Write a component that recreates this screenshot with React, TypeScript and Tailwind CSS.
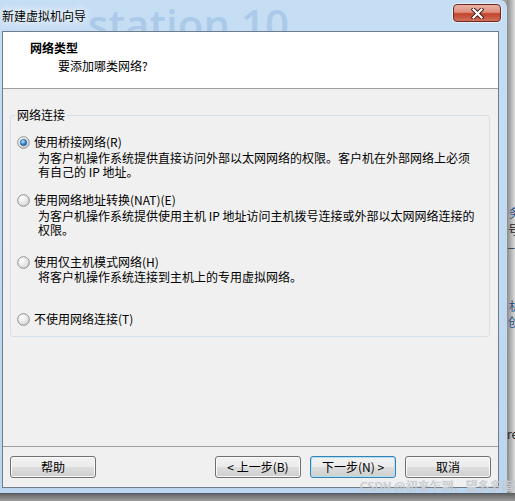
import React from "react"

const RADIOS = [
  { label: "使用桥接网络(R)", checked: true, desc: ["为客户机操作系统提供直接访问外部以太网网络的权限。客户机在外部网络上必须", "有自己的 IP 地址。"], mt: "mt-0", dmt: "mt-[2px]" },
  { label: "使用网络地址转换(NAT)(E)", checked: false, desc: ["为客户机操作系统提供使用主机 IP 地址访问主机拨号连接或外部以太网网络连接的", "权限。"], mt: "mt-[14px]", dmt: "mt-[2px]" },
  { label: "使用仅主机模式网络(H)", checked: false, desc: ["将客户机操作系统连接到主机上的专用虚拟网络。"], mt: "mt-[18px]", dmt: "mt-[1px]" },
  { label: "不使用网络连接(T)", checked: false, desc: [], mt: "mt-[28px]", dmt: "mt-0" },
]

function Radio({ checked, id }: { checked: boolean; id: string }) {
  return (
    <svg width="13" height="13" viewBox="0 0 13 13" className="shrink-0">
      <defs>
        <radialGradient id={`ring-${id}`} cx="0.35" cy="0.3" r="0.8">
          <stop offset="0%" stopColor="#ffffff" />
          <stop offset="60%" stopColor="#e6e6e6" />
          <stop offset="100%" stopColor="#c9c9c9" />
        </radialGradient>
        <radialGradient id={`dot-${id}`} cx="0.4" cy="0.35" r="0.7">
          <stop offset="0%" stopColor="#b8e4fa" />
          <stop offset="55%" stopColor="#3d8fd6" />
          <stop offset="100%" stopColor="#1a4f8e" />
        </radialGradient>
      </defs>
      <circle cx="6.5" cy="6.5" r="5.8" fill={`url(#ring-${id})`} stroke="#8e8f8f" strokeWidth="1" />
      {checked && <circle cx="6.5" cy="6.5" r="3.3" fill={`url(#dot-${id})`} stroke="#285f9c" strokeWidth="0.6" />}
    </svg>
  )
}

function WinButton({ children, primary }: { children: React.ReactNode; primary?: boolean }) {
  return (
    <button
      className={
        "flex h-[22px] w-[86px] items-center justify-center rounded-[3px] border text-[12px] leading-none text-black bg-[linear-gradient(to_bottom,#f2f2f2_0%,#ebebeb_48%,#dddddd_52%,#cfcfcf_100%)] " +
        (primary
          ? "border-[#3c7fb1] shadow-[inset_0_0_0_1px_#a9e1fa]"
          : "border-[#707070] shadow-[inset_0_0_0_1px_#fafafa]")
      }
    >
      {children}
    </button>
  )
}

export default function App() {
  return (
    <div className="relative h-[501px] w-[515px] overflow-hidden bg-[#a0a0a0] font-['Noto_Sans_CJK_SC',sans-serif] text-[12px] text-black">
      <div className="flex h-[493px]">
        {/* window */}
        <div className="flex w-[507px] flex-col rounded-tr-[7px] bg-[linear-gradient(to_bottom,#c6def4,#bcd6f0)] shadow-[1px_1px_0_#4d5b6b]">
          {/* title bar */}
          <div className="relative flex h-[31px] items-start justify-between overflow-hidden">
            <span className="pointer-events-none absolute left-[88px] top-[3px] font-['Open_Sans',sans-serif] text-[42px] font-semibold leading-none text-[#abcaea] whitespace-nowrap">
              station 10
            </span>
            <span className="relative ml-[2px] mt-[8px] leading-[16px] [text-shadow:0_0_6px_#ffffff,0_0_10px_#ffffff]">新建虚拟机向导</span>
            <div className="relative mr-[6px] mt-[4px] flex h-[18px] w-[48px] items-center justify-center rounded-[4px] border border-[#6b2a22] bg-[linear-gradient(to_bottom,#eab1a4_0%,#e0907f_45%,#c2432c_55%,#d3705a_100%)] shadow-[0_0_0_1px_#e7eef7]">
              <svg width="13" height="11" viewBox="0 0 13 11">
                <path d="M2.5 1.5 L10.5 9.5 M10.5 1.5 L2.5 9.5" stroke="#3b1612" strokeWidth="4" strokeLinecap="square" />
                <path d="M2.5 1.5 L10.5 9.5 M10.5 1.5 L2.5 9.5" stroke="#ffffff" strokeWidth="2.2" strokeLinecap="square" />
              </svg>
            </div>
          </div>

          {/* client area */}
          <div className="ml-[2px] mr-[8px] flex h-[457px] flex-col border border-[#6e7c8c] bg-[#f0f0f0]">
            <div className="h-[57px] border-b border-[#a0a0a0] bg-white pt-[9px]">
              <div className="ml-[27px] font-bold leading-[14px]">网络类型</div>
              <div className="ml-[55px] mt-[4px] leading-[14px]">要添加哪类网络?</div>
            </div>

            <div className="flex flex-1 flex-col">
              <fieldset className="ml-[7px] mt-[19px] w-[480px] rounded-[3px] border border-[#d5dfe5] pb-[10px] pl-[4px] pt-[13px]">
                <legend className="px-[2px] leading-[14px]">网络连接</legend>
                {RADIOS.map((r, i) => (
                  <div key={r.label} className={r.mt}>
                    <div className="ml-[2px] flex h-[14px] items-center gap-[4px] leading-[14px]">
                      <Radio checked={r.checked} id={String(i)} />
                      <span>{r.label}</span>
                    </div>
                    {r.desc.length > 0 && (
                      <div className={"ml-[23px] leading-[14px] " + r.dmt}>
                        {r.desc.map((d) => (
                          <div key={d} className="whitespace-nowrap">{d}</div>
                        ))}
                      </div>
                    )}
                  </div>
                ))}
              </fieldset>

              <div className="flex-1" />
              <div className="border-t border-[#a0a0a0]" />
              <div className="mt-[9px] mb-[9px] flex items-center pl-[7px] pr-[7px]">
                <WinButton>帮助</WinButton>
                <div className="flex-1" />
                <div className="flex gap-[9px]">
                  <WinButton>&lt; 上一步(B)</WinButton>
                  <WinButton primary>下一步(N) &gt;</WinButton>
                  <WinButton>取消</WinButton>
                </div>
              </div>
            </div>
          </div>
        </div>

        {/* background window showing at the right */}
        <div className="relative flex-1 overflow-hidden bg-[linear-gradient(to_right,#8a8a8a,#dcdcdc)] text-[12px] leading-none">
          <span className="absolute left-[2px] top-[207px] text-[#2a4f86]">务</span>
          <span className="absolute left-[1px] top-[224px] text-[#222]">号_</span>
          <span className="absolute left-[2px] top-[300px] text-[#2a4f86]">机</span>
          <span className="absolute left-[1px] top-[316px] text-[#2a4f86]">创</span>
          <span className="absolute left-[0px] top-[428px] text-[#222]">re</span>
        </div>
      </div>
      <div className="h-[8px] bg-[linear-gradient(to_bottom,#5e5e5e,#9c9c9c)]" />

      <span className="pointer-events-none absolute left-[360px] top-[480px] whitespace-nowrap text-[12px] leading-none text-[#d0d4d9] [text-shadow:0_0_1px_#a8aeb6]">
        CSDN @初来乍到，望多多指教
      </span>
    </div>
  )
}
